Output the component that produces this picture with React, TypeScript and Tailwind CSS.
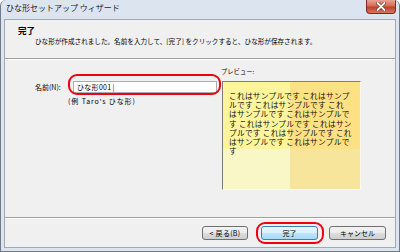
export default function App() {
  const lines = [
    "これはサンプルです これはサンプ",
    "ルです これはサンプルです これ",
    "はサンプルです これはサンプルで",
    "す これはサンプルです これはサン",
    "プルです これはサンプルです これ",
    "はサンプルです これはサンプルで",
    "す",
  ];
  return (
    <div className="relative w-[400px] h-[252px] overflow-hidden bg-[#dce5ef] border-x border-b border-[#707b88] rounded-t-[6px] flex flex-col font-['Noto_Sans_CJK_JP',sans-serif] text-black">
      {/* title bar */}
      <div className="h-[19px] shrink-0 flex items-start justify-between">
        <div className="pl-[5px] pt-[3px] text-[8px] leading-[10px] text-[#1e1e1e] whitespace-nowrap">
          ひな形セットアップ ウィザード
        </div>
        <div className="mr-[3px] w-[30px] h-[14px] rounded-b-[4px] border border-t-0 border-[#7a2a20] bg-[linear-gradient(to_bottom,#e9a292_0%,#d66d58_45%,#c2402b_55%,#d9775f_100%)] flex items-center justify-center">
          <svg width="10" height="9" viewBox="0 0 10 9">
            <path d="M1.5 1 L8.5 8 M8.5 1 L1.5 8" stroke="#6b2a20" strokeWidth="3.2" strokeLinecap="round" />
            <path d="M1.5 1 L8.5 8 M8.5 1 L1.5 8" stroke="#ffffff" strokeWidth="1.8" strokeLinecap="round" />
          </svg>
        </div>
      </div>

      {/* client area */}
      <div className="mx-[3px] mb-[3px] flex-1 border border-[#a2a9b2] bg-[#f0f0f0] flex flex-col">
        {/* header */}
        <div className="h-[38px] shrink-0 pt-[5px] pl-[13px]">
          <div className="text-[8.5px] leading-[10px] font-bold">完了</div>
          <div className="mt-[2px] pl-[17px] text-[6.6px] leading-[9px] whitespace-nowrap">
            ひな形が作成されました。名前を入力して、[完了] をクリックすると、ひな形が保存されます。
          </div>
        </div>
        <div className="h-[2px] shrink-0 border-t border-b border-t-[#a0a0a0] border-b-white" />

        {/* body */}
        <div className="flex-1 flex items-start pt-[8px] pl-[30px]">
          <div className="mt-[13px] flex flex-col">
            <div className="flex items-center">
              <div className="w-[38px] text-[7px] leading-[12px] whitespace-nowrap">名前(N):</div>
              <div className="w-[144px] h-[12px] border border-[#abadb3] bg-white pl-[3px] text-[7px] leading-[10px] tracking-[0.3px] whitespace-nowrap">
                ひな形001<span className="ml-[1px]">|</span>
              </div>
            </div>
            <div className="ml-[33px] mt-[4px] text-[7px] leading-[9px] tracking-[0.9px] whitespace-nowrap">
              (例 Taro's ひな形)
            </div>
          </div>
          <div className="ml-[4px] flex flex-col">
            <div className="text-[6.3px] leading-[8px] whitespace-nowrap">プレビュー:</div>
            <div className="mt-[5px] ml-[1px] w-[139px] h-[109px] border-t border-l border-[#7c7c7c] border-r border-b border-r-[#fffbe6] border-b-[#fffbe6] bg-[linear-gradient(to_right,#fdf49c_67px,#fde184_67px),linear-gradient(to_right,#faf7c6_67px,#f8e59c_67px)] bg-[length:100%_67px,100%_100%] bg-no-repeat pl-[6px] pt-[9px]">
              {lines.map((l, i) => (
                <div key={i} className="h-[9.2px] text-[7.7px] leading-[9.2px] tracking-[0.25px] whitespace-nowrap text-[#111]">
                  {l}
                </div>
              ))}
            </div>
          </div>
        </div>

        <div className="h-[2px] shrink-0 border-t border-b border-t-[#a0a0a0] border-b-white" />

        {/* footer */}
        <div className="h-[28px] shrink-0 flex justify-end items-start pt-[7px] pr-[9px]">
          <div className="w-[46px] h-[14px] rounded-[3px] border border-[#707070] bg-[linear-gradient(to_bottom,#f2f2f2_0%,#ebebeb_50%,#dddddd_50%,#cfcfcf_100%)] flex items-center justify-center text-[7px] leading-[10px] tracking-[0.3px] whitespace-nowrap">
            &lt; 戻る(B)
          </div>
          <div className="ml-[13px] w-[57px] h-[14px] rounded-[3px] border border-[#3c7fb1] bg-[linear-gradient(to_bottom,#eaf6fd_0%,#d9f0fc_50%,#bee6fd_50%,#a7d9f5_100%)] flex items-center justify-center text-[7px] leading-[10px] whitespace-nowrap">
            完了
          </div>
          <div className="ml-[11px] w-[57px] h-[14px] rounded-[3px] border border-[#707070] bg-[linear-gradient(to_bottom,#f2f2f2_0%,#ebebeb_50%,#dddddd_50%,#cfcfcf_100%)] flex items-center justify-center text-[7px] leading-[10px] whitespace-nowrap">
            キャンセル
          </div>
        </div>
      </div>

      {/* red annotation rings */}
      <div className="absolute left-[67px] top-[74px] w-[153px] h-[21px] border-[2.5px] border-[#f00010] rounded-[9px]" />
      <div className="absolute left-[255px] top-[222px] w-[68px] h-[22px] border-[2.5px] border-[#f00010] rounded-[9px]" />
    </div>
  );
}
